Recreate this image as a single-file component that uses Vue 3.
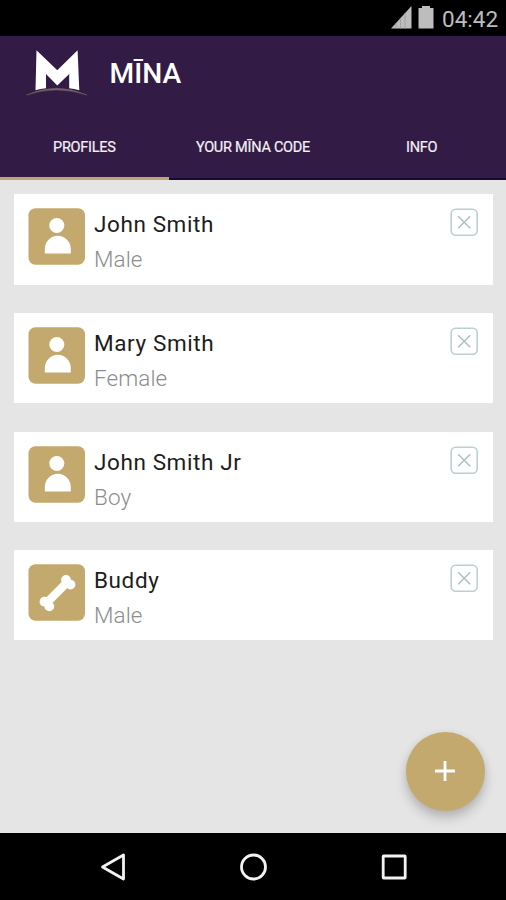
<script setup>
const tabs = ['PROFILES', 'YOUR MĪNA CODE', 'INFO']
const profiles = [
  { name: 'John Smith', kind: 'Male', icon: 'person' },
  { name: 'Mary Smith', kind: 'Female', icon: 'person' },
  { name: 'John Smith Jr', kind: 'Boy', icon: 'person' },
  { name: 'Buddy', kind: 'Male', icon: 'bone' },
]
</script>

<template>
  <div class="screen">
    <div class="status">
      <svg class="signal" width="21" height="23" viewBox="0 0 21 23">
        <path d="M0 22.5 20.5 0V22.5Z" fill="#bdbdbd" />
        <path d="M5 17V22.5M9.5 12V22.5M14 7V22.5" stroke="#a0a0a0" stroke-width="1" />
      </svg>
      <svg class="battery" width="16" height="23" viewBox="0 0 16 23">
        <path d="M4 0H12V2H15.5V22.5H.5V2H4Z" fill="#bdbdbd" />
      </svg>
      <span class="clock">04:42</span>
    </div>

    <header class="appbar">
      <div class="brand">
        <svg class="logo" width="62" height="48" viewBox="0 0 62 48">
          <path d="M10.500 .3 31.300 20.300 51.600 .3 53.300 40.300Q48 38.800 43.200 38.300V24L31.300 35.500 20 24V38.300Q14 39 9.500 40.300Z" fill="#fff" />
          <path d="M.5 45Q30 31.500 61 45Q30 34.800 .5 45Z" fill="#796363" stroke="#796363" stroke-width=".5" />
        </svg>
        <h1>MĪNA</h1>
      </div>
      <nav class="tabs">
        <div v-for="(tab, i) in tabs" :key="tab" class="tab" :class="{ active: i === 0 }">
          <span>{{ tab }}</span>
        </div>
      </nav>
    </header>

    <main class="content">
      <article v-for="p in profiles" :key="p.name" class="card">
        <svg class="avatar" width="57" height="57" viewBox="0 0 57 57">
          <rect x=".5" y=".2" width="56.500" height="56.500" rx="7" fill="#c3a96d" />
          <g v-if="p.icon === 'person'" fill="#fff">
            <circle cx="28.800" cy="17.500" r="7.500" />
            <path d="M16.800 45.600V41A13 13.200 0 0 1 42.800 41V45.600Z" />
          </g>
          <g v-else fill="#fff">
            <path d="M18.500 39 39.500 18" stroke="#fff" stroke-width="8.200" />
            <circle cx="38" cy="16" r="4.900" />
            <circle cx="42.500" cy="20.600" r="4.900" />
            <circle cx="16.500" cy="37.700" r="4.900" />
            <circle cx="21.300" cy="42.400" r="4.900" />
          </g>
        </svg>
        <div class="info">
          <div class="name">{{ p.name }}</div>
          <div class="kind">{{ p.kind }}</div>
        </div>
        <svg class="remove" width="28" height="28" viewBox="0 0 28 28" fill="none" stroke="#bccfd2">
          <rect x="1.200" y="1.200" width="26" height="26" rx="4.500" stroke-width="1.600" />
          <path d="M8.200 8.300 20.200 20.300M20.200 8.300 8.200 20.300" stroke="#a9bec2" stroke-width="1.400" />
        </svg>
      </article>
      <button class="fab" aria-label="Add">
        <svg width="22" height="22" viewBox="0 0 22 22">
          <path d="M11 1V21M1 11H21" stroke="#fff" stroke-width="2.800" />
        </svg>
      </button>
    </main>

    <footer class="navbar">
      <svg width="28" height="28" viewBox="0 0 28 28">
        <path d="M24.500 2V26L3.500 14Z" />
      </svg>
      <svg width="28" height="28" viewBox="0 0 28 28">
        <circle cx="14.500" cy="14" r="12" />
      </svg>
      <svg width="28" height="28" viewBox="0 0 28 28">
        <rect x="3.200" y="3" width="22" height="22" rx=".5" />
      </svg>
    </footer>
  </div>
</template>

<style>
body {
  margin: 0;
}
</style>

<style scoped>
.screen {
  width: 506px;
  height: 900px;
  display: flex;
  flex-direction: column;
  overflow: hidden;
  background: #e5e5e5;
  font-family: Roboto, "Liberation Sans", sans-serif;
}
.status {
  height: 36px;
  flex: none;
  display: flex;
  align-items: center;
  justify-content: flex-end;
  box-sizing: border-box;
  padding-right: 8px;
  background: #000;
}
.signal {
  margin: 0 6px 2px 0;
}
.battery {
  margin: 0 8px 2px 0;
}
.clock {
  width: 56px;
  font-size: 22.5px;
  line-height: 36px;
  padding-top: 2px;
  color: #bdbdbd;
  white-space: nowrap;
}
.appbar {
  height: 144px;
  flex: none;
  display: flex;
  flex-direction: column;
  background: #321c46;
}
.brand {
  height: 78px;
  display: flex;
  align-items: center;
  padding-left: 26px;
}
.logo {
  margin-top: -2px;
}
h1 {
  margin: 0 0 3px 21.5px;
  font-size: 28.2px;
  line-height: 34px;
  font-weight: 500;
  color: #fff;
}
.tabs {
  flex: 1;
  display: flex;
}
.tab {
  flex: 1;
  display: flex;
  justify-content: center;
  padding-top: 25px;
  border-bottom: 2px solid #160b35;
  font-size: 14.5px;
  line-height: 18px;
  letter-spacing: -0.25px;
  color: #f4f0f5;
  -webkit-text-stroke: 0.2px #f4f0f5;
}
.tab.active {
  border-bottom: 3px solid #c3a276;
}
.content {
  flex: 1;
  position: relative;
  display: flex;
  flex-direction: column;
  gap: 28.3px;
  padding: 14.4px 13.5px 0 14.4px;
}
.card {
  height: 90.3px;
  display: flex;
  align-items: flex-start;
  box-sizing: border-box;
  padding: 14px 14.6px 0 13.6px;
  background: #fff;
}
.info {
  flex: 1;
  padding-left: 9px;
}
.name,
.kind {
  font-size: 22.5px;
  line-height: 35px;
  white-space: nowrap;
}
.name {
  margin-top: -1px;
  letter-spacing: 0.6px;
  color: #1d1d1d;
}
.kind {
  letter-spacing: 0.1px;
  font-weight: 300;
  color: #8d8d8d;
}
.fab {
  position: absolute;
  right: 21.5px;
  bottom: 22.5px;
  width: 79px;
  height: 79px;
  display: flex;
  align-items: center;
  justify-content: center;
  padding: 0;
  border: 0;
  border-radius: 50%;
  background: #c3a96d;
  box-shadow: 0 7px 12px rgba(0, 0, 0, 0.2), 0 1px 8px rgba(0, 0, 0, 0.06);
}
.navbar {
  height: 67px;
  flex: none;
  display: flex;
  justify-content: center;
  align-items: center;
  gap: 112.5px;
  background: #000;
}
.navbar svg {
  fill: none;
  stroke: #f2f2f2;
  stroke-width: 2.8;
  stroke-linejoin: round;
}
</style>
